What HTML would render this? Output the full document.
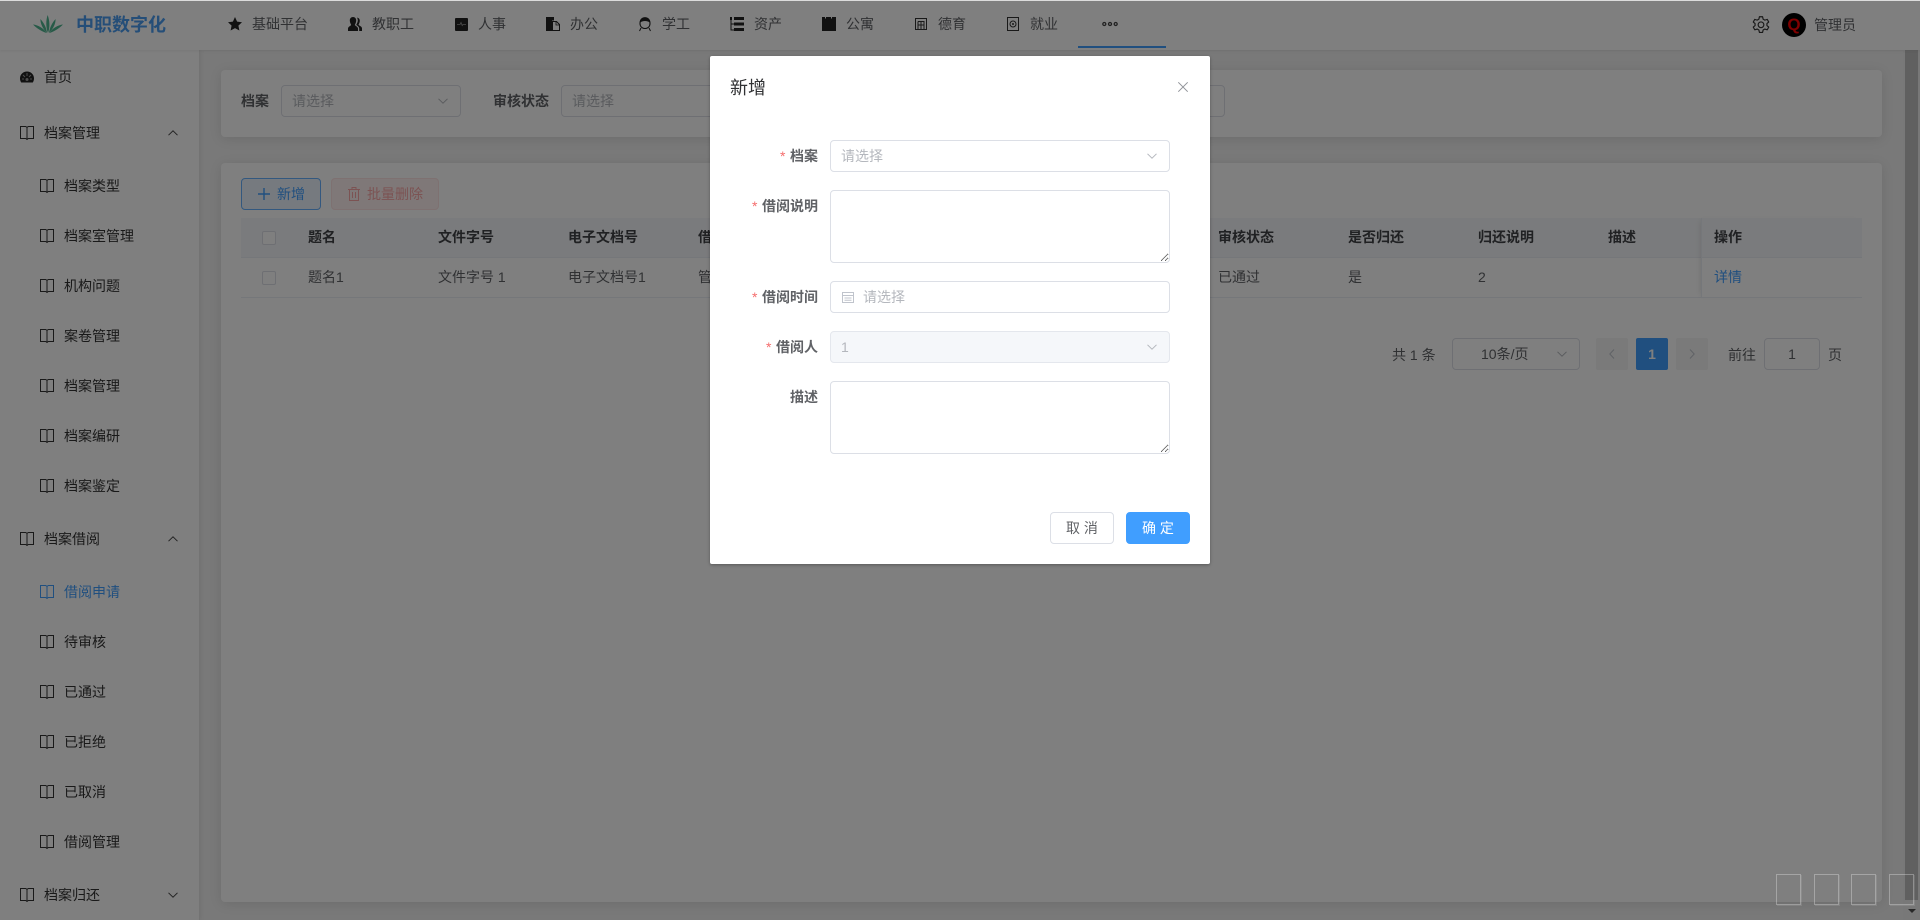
<!DOCTYPE html>
<html lang="zh-CN">
<head>
<meta charset="utf-8">
<title>中职数字化</title>
<style>
*{box-sizing:border-box}
html,body{margin:0;padding:0;width:1920px;height:920px;overflow:hidden;background:#f2f2f2;font-family:"Liberation Sans","Noto Sans CJK SC",sans-serif;font-size:14px;color:#606266}
.a{position:absolute}
.t{position:absolute;white-space:nowrap;line-height:20px;height:20px}
svg{position:absolute;display:block;overflow:visible}
#header{left:0;top:0;width:1920px;height:50px;background:#fff;box-shadow:0 1px 3px rgba(0,0,0,.08);z-index:3}
#side{left:0;top:50px;width:200px;height:870px;background:#fff;border-right:1px solid #e6e6e6;box-shadow:1px 0 4px rgba(0,0,0,.06);z-index:2}
.card{position:absolute;background:#fff;border-radius:4px;box-shadow:0 2px 12px rgba(0,0,0,.1)}
.inp{position:absolute;height:32px;border:1px solid #dcdfe6;border-radius:4px;background:#fff}
.b{font-weight:700}
.th{font-weight:700;color:#404246}
.ph{color:#b4b7bd}
.s{color:#333}
#mask{left:0;top:1px;width:1920px;height:919px;background:rgba(0,0,0,.5);z-index:5}
#dlg{left:710px;top:56px;width:500px;height:508px;background:#fff;border-radius:2px;box-shadow:0 1px 3px rgba(0,0,0,.3);z-index:6}
.star{color:#f56c6c}
.lab{font-weight:700;color:#606266}
textarea{position:absolute;left:120px;width:340px;border:1px solid #dcdfe6;border-radius:4px;background:#fff;padding:0;margin:0;outline:0;display:block;resize:vertical}
.btn{position:absolute;top:456px;width:64px;height:32px;border-radius:4px;text-align:center;line-height:30px;font-size:14px;white-space:pre}
.sq{position:absolute;top:874px;width:25px;height:31px;border:1px solid rgba(255,255,255,.3);box-shadow:1px 1px 0 rgba(255,255,255,.1);z-index:7}
</style>
</head>
<body>
<svg width="0" height="0" style="position:absolute">
<defs>
<symbol id="book" viewBox="0 0 14 14"><path d="M.5 .5H5.600l1.400.8v12l-1.400-.8H.500zM13.500 .5H8.400L7 1.300v12l1.400-.8h5.100z" fill="none" stroke="currentColor" stroke-width="1"/></symbol>
<symbol id="chev" viewBox="0 0 10 6"><path d="M.5.800 5 5.200 9.500.800" fill="none" stroke="currentColor" stroke-width="1"/></symbol>
<symbol id="chevup" viewBox="0 0 10 6"><path d="M.5 5.200 5 .8l4.500 4.400" fill="none" stroke="currentColor" stroke-width="1"/></symbol>
</defs>
</svg>

<!-- scrollbar -->
<div class="a" style="left:1903px;top:0;width:17px;height:920px;background:#f1f1f1"></div>
<div class="a" style="left:1905px;top:0;width:13px;height:900px;background:#c1c1c1"></div>
<div class="a" style="left:1908px;top:909px;width:0;height:0;border-left:4px solid transparent;border-right:4px solid transparent;border-top:4px solid #505050"></div>

<!-- header -->
<div id="header" class="a">
  <svg style="left:33px;top:15px" width="30" height="18" viewBox="0 0 30 18">
    <g fill="#4fb590">
      <path d="M15 18C12.600 12 13 5 14.600 0c2 5 2.600 12 .4 18z"/>
      <path d="M14 18C10 14 7.400 9 7.400 4c3.200 3.600 6 8.400 6.600 14z"/>
      <path d="M16 18c4-4 6.600-9 6.600-14-3.200 3.600-6 8.400-6.600 14z"/>
      <path d="M13.500 18C9 16.600 4 13.500 0 9.500c5 .5 10.500 3.500 13.500 8.500z"/>
      <path d="M16.500 18c4.500-1.400 9.500-4.500 13.500-8.500-5 .5-10.500 3.500-13.500 8.500z"/>
    </g>
  </svg>
  <div class="t b" style="left:76px;top:15px;font-size:18px;color:#4a9cf0">中职数字化</div>

  <svg style="left:228px;top:17px" width="14" height="14" viewBox="0 0 14 14"><path d="M7 0l2.100 4.600 4.900.6-3.600 3.400 1 4.900L7 11.100 2.600 13.500l1-4.900L0 5.200l4.900-.6z" fill="#222"/></svg>
  <div class="t" style="left:252px;top:14px">基础平台</div>

  <svg style="left:348px;top:17px" width="14" height="14" viewBox="0 0 14 14"><path d="M5 0c2 0 3.200 1.500 3.200 3.500S7.200 7 6.800 8c.4.800 3.200 1.800 3.200 3.500V14H0v-2.500C0 9.800 2.800 8.800 3.200 8 2.800 7 1.800 5.500 1.800 3.500S3 0 5 0zM9 .6c1.800.2 2.800 1.500 2.800 3.100S11 6.800 10.500 7.800c.3.700 3.500 1.700 3.500 3.500V14h-2.800v-2.500c0-1.500-1.500-2.800-3-3.500.8-1.500 1.600-2.900 1.600-4.500S9.400 1.500 9 .6z" fill="#222"/></svg>
  <div class="t" style="left:372px;top:14px">教职工</div>

  <svg style="left:455px;top:18px" width="13" height="13" viewBox="0 0 13 13"><rect width="13" height="13" rx="1" fill="#222"/><path d="M2 6.500h3l1-2 1.200 3 .8-1h3" stroke="#999" stroke-width=".8" fill="none"/></svg>
  <div class="t" style="left:478px;top:14px">人事</div>

  <svg style="left:546px;top:17px" width="14" height="14" viewBox="0 0 14 14"><path d="M0 0h8v3.500H6V14H0z" fill="#222"/><path d="M6.500 4.500h4l3 3V13.500h-7z" fill="none" stroke="#222"/><path d="M10 4.500v3.500h3.500" fill="none" stroke="#222" stroke-width=".8"/></svg>
  <div class="t" style="left:570px;top:14px">办公</div>

  <svg style="left:638px;top:17px" width="14" height="14" viewBox="0 0 14 14"><path d="M2 6.500C2 3 4 .7 7 .7S12 3 12 6.500c0 3-2 5-5 5s-5-2-5-5z" fill="none" stroke="#222" stroke-width="1.100"/><path d="M1.800 6C3 4.500 5 4 7 4s4 .5 5.200 2l-.4-3L9 .7H5L2.200 3z" fill="#222"/><path d="M3 11l-1.500 3M11 11l1.500 3" stroke="#222"/></svg>
  <div class="t" style="left:662px;top:14px">学工</div>

  <svg style="left:730px;top:17px" width="14" height="14" viewBox="0 0 14 14"><path d="M0 0h2v3H0zM4 0h10v3H4zM4 5.500h10v3H4zM4 11h10v3H4z" fill="#222"/><path d="M1 3v10h3M1 7h3" stroke="#222" fill="none"/></svg>
  <div class="t" style="left:754px;top:14px">资产</div>

  <svg style="left:822px;top:17px" width="14" height="14" viewBox="0 0 14 14"><path d="M0 0h3v1.500h1V0h5v1.500h1V0h4v14H0z" fill="#222"/></svg>
  <div class="t" style="left:846px;top:14px">公寓</div>

  <svg style="left:915px;top:18px" width="12" height="12" viewBox="0 0 12 12"><path d="M.5.500h11v11H.500zM3 3.500h6v8M3 3.500v8M6 3.500v8M3 7h6" fill="none" stroke="#333"/></svg>
  <div class="t" style="left:938px;top:14px">德育</div>

  <svg style="left:1007px;top:17px" width="12" height="14" viewBox="0 0 12 14"><path d="M.5.500h11v13H.500z" fill="none" stroke="#333"/><circle cx="6" cy="7" r="3" fill="none" stroke="#333"/><circle cx="6" cy="7" r="1" fill="#333"/></svg>
  <div class="t" style="left:1030px;top:14px">就业</div>

  <svg style="left:1102px;top:21px" width="16" height="6" viewBox="0 0 16 6"><g fill="none" stroke="#444" stroke-width="1.300"><circle cx="2.300" cy="3" r="1.500"/><circle cx="8" cy="3" r="1.500"/><circle cx="13.700" cy="3" r="1.500"/></g></svg>
  <div class="a" style="left:1078px;top:46px;width:88px;height:2px;background:#409eff"></div>

  <svg style="left:1752px;top:16px" width="18" height="18" viewBox="0 0 17 17"><path d="M7 .7h3l.5 2.300 1.600.9 2.300-.7 1.400 2.500-1.700 1.500v1.800l1.700 1.500-1.400 2.500-2.300-.7-1.600.9-.5 2.300H7l-.5-2.300-1.600-.9-2.300.7L1.200 10.500l1.700-1.500V7.200L1.200 5.700l1.400-2.500 2.300.7L6.500 3z" fill="none" stroke="#333" stroke-width="1.100" stroke-linejoin="round"/><circle cx="8.500" cy="8.300" r="2.700" fill="none" stroke="#333" stroke-width="1.100"/></svg>
  <div class="a" style="left:1782px;top:13px;width:24px;height:24px;border-radius:50%;background:#000;color:#f00;font-weight:700;font-size:17px;line-height:24px;text-align:center">Q</div>
  <div class="t" style="left:1814px;top:15px">管理员</div>
</div>

<!-- sidebar -->
<div id="side" class="a"></div>
<div class="a s" style="left:0;top:0;width:200px;height:920px;z-index:3;pointer-events:none">
  <svg style="left:20px;top:70px" width="14" height="14" viewBox="0 0 14 14"><path d="M7 1.500C3.100 1.500 0 4.500 0 8.400c0 1.500.4 2.900 1.200 4.100h11.600c.8-1.200 1.200-2.600 1.200-4.100 0-3.900-3.100-6.900-7-6.900z" fill="#222"/><path d="M7 3v3M3 5l2 2M11 5L9 7M2 9h2M10 9h2" stroke="#999" stroke-width="1"/><circle cx="7" cy="9.500" r="1.500" fill="#999"/></svg>
  <div class="t" style="left:44px;top:67px">首页</div>

  <svg style="left:20px;top:126px;color:#333" width="14" height="14"><use href="#book"/></svg>
  <div class="t" style="left:44px;top:123px">档案管理</div>
  <svg style="left:168px;top:130px;color:#444" width="10" height="6"><use href="#chevup"/></svg>

  <svg style="left:40px;top:179px;color:#333" width="14" height="14"><use href="#book"/></svg>
  <div class="t" style="left:64px;top:176px">档案类型</div>
  <svg style="left:40px;top:229px;color:#333" width="14" height="14"><use href="#book"/></svg>
  <div class="t" style="left:64px;top:226px">档案室管理</div>
  <svg style="left:40px;top:279px;color:#333" width="14" height="14"><use href="#book"/></svg>
  <div class="t" style="left:64px;top:276px">机构问题</div>
  <svg style="left:40px;top:329px;color:#333" width="14" height="14"><use href="#book"/></svg>
  <div class="t" style="left:64px;top:326px">案卷管理</div>
  <svg style="left:40px;top:379px;color:#333" width="14" height="14"><use href="#book"/></svg>
  <div class="t" style="left:64px;top:376px">档案管理</div>
  <svg style="left:40px;top:429px;color:#333" width="14" height="14"><use href="#book"/></svg>
  <div class="t" style="left:64px;top:426px">档案编研</div>
  <svg style="left:40px;top:479px;color:#333" width="14" height="14"><use href="#book"/></svg>
  <div class="t" style="left:64px;top:476px">档案鉴定</div>

  <svg style="left:20px;top:532px;color:#333" width="14" height="14"><use href="#book"/></svg>
  <div class="t" style="left:44px;top:529px">档案借阅</div>
  <svg style="left:168px;top:536px;color:#444" width="10" height="6"><use href="#chevup"/></svg>

  <svg style="left:40px;top:585px;color:#409eff" width="14" height="14"><use href="#book"/></svg>
  <div class="t" style="left:64px;top:582px;color:#409eff">借阅申请</div>
  <svg style="left:40px;top:635px;color:#333" width="14" height="14"><use href="#book"/></svg>
  <div class="t" style="left:64px;top:632px">待审核</div>
  <svg style="left:40px;top:685px;color:#333" width="14" height="14"><use href="#book"/></svg>
  <div class="t" style="left:64px;top:682px">已通过</div>
  <svg style="left:40px;top:735px;color:#333" width="14" height="14"><use href="#book"/></svg>
  <div class="t" style="left:64px;top:732px">已拒绝</div>
  <svg style="left:40px;top:785px;color:#333" width="14" height="14"><use href="#book"/></svg>
  <div class="t" style="left:64px;top:782px">已取消</div>
  <svg style="left:40px;top:835px;color:#333" width="14" height="14"><use href="#book"/></svg>
  <div class="t" style="left:64px;top:832px">借阅管理</div>

  <svg style="left:20px;top:888px;color:#333" width="14" height="14"><use href="#book"/></svg>
  <div class="t" style="left:44px;top:885px">档案归还</div>
  <svg style="left:168px;top:892px;color:#444" width="10" height="6"><use href="#chev"/></svg>
</div>

<!-- filter card -->
<div class="card" style="left:221px;top:70px;width:1661px;height:67px"></div>
<div class="t b" style="left:241px;top:91px">档案</div>
<div class="inp" style="left:281px;top:85px;width:180px"></div>
<div class="t ph" style="left:292px;top:91px">请选择</div>
<svg style="left:438px;top:98px;color:#b4b7bd" width="10" height="6"><use href="#chev"/></svg>
<div class="t b" style="left:493px;top:91px">审核状态</div>
<div class="inp" style="left:561px;top:85px;width:180px"></div>
<div class="t ph" style="left:572px;top:91px">请选择</div>
<div class="inp" style="left:1045px;top:85px;width:180px"></div>

<!-- table card -->
<div class="card" style="left:221px;top:163px;width:1661px;height:739px"></div>
<div class="a" style="left:241px;top:178px;width:80px;height:32px;background:#ecf5ff;border:1px solid #66b1ff;border-radius:4px"></div>
<svg style="left:258px;top:188px" width="12" height="12" viewBox="0 0 12 12"><path d="M6 0v12M0 6h12" stroke="#409eff" stroke-width="1.400"/></svg>
<div class="t" style="left:277px;top:184px;color:#409eff">新增</div>
<div class="a" style="left:331px;top:178px;width:108px;height:32px;background:#fef0f0;border:1px solid #fde2e2;border-radius:4px"></div>
<svg style="left:348px;top:187px" width="12" height="14" viewBox="0 0 12 14"><path d="M0 2.500h12M4 2.500V.5h4v2M1.500 2.500V13.500h9V2.500M4.500 5v6M7.500 5v6" fill="none" stroke="#f9a7a7"/></svg>
<div class="t" style="left:367px;top:184px;color:#f9a7a7">批量删除</div>

<div class="a" style="left:241px;top:218px;width:1621px;height:40px;background:#f5f7fa;border-bottom:1px solid #ebeef5"></div>
<div class="a" style="left:241px;top:258px;width:1621px;height:40px;border-bottom:1px solid #ebeef5"></div>
<div class="a" style="left:1701px;top:218px;width:161px;height:80px;border-left:1px solid #ebeef5;box-shadow:-3px 0 6px -3px rgba(0,0,0,.12)"></div>
<div class="a" style="left:262px;top:231px;width:14px;height:14px;border:1px solid #dcdfe6;border-radius:2px;background:#fff"></div>
<div class="a" style="left:262px;top:271px;width:14px;height:14px;border:1px solid #dcdfe6;border-radius:2px;background:#fff"></div>

<div class="t th" style="left:308px;top:227px">题名</div>
<div class="t th" style="left:438px;top:227px">文件字号</div>
<div class="t th" style="left:568px;top:227px">电子文档号</div>
<div class="t th" style="left:698px;top:227px">借阅说明</div>
<div class="t th" style="left:1218px;top:227px">审核状态</div>
<div class="t th" style="left:1348px;top:227px">是否归还</div>
<div class="t th" style="left:1478px;top:227px">归还说明</div>
<div class="t th" style="left:1608px;top:227px">描述</div>
<div class="t th" style="left:1714px;top:227px">操作</div>

<div class="t" style="left:308px;top:267px">题名1</div>
<div class="t" style="left:438px;top:267px">文件字号 1</div>
<div class="t" style="left:568px;top:267px">电子文档号1</div>
<div class="t" style="left:698px;top:267px">管理员</div>
<div class="t" style="left:1218px;top:267px">已通过</div>
<div class="t" style="left:1348px;top:267px">是</div>
<div class="t" style="left:1478px;top:267px">2</div>
<div class="t" style="left:1714px;top:267px;color:#409eff">详情</div>

<!-- pagination -->
<div class="t" style="left:1392px;top:345px">共 1 条</div>
<div class="inp" style="left:1452px;top:338px;width:128px"></div>
<div class="t" style="left:1481px;top:344px">10条/页</div>
<svg style="left:1557px;top:351px;color:#b4b7bd" width="10" height="6"><use href="#chev"/></svg>
<div class="a" style="left:1596px;top:338px;width:32px;height:32px;background:#f4f4f5;border-radius:2px"></div>
<svg style="left:1609px;top:349px" width="6" height="10" viewBox="0 0 6 10"><path d="M5 .5.800 5 5 9.500" fill="none" stroke="#c0c4cc"/></svg>
<div class="a b" style="left:1636px;top:338px;width:32px;height:32px;background:#409eff;border-radius:2px;color:#fff;text-align:center;line-height:32px">1</div>
<div class="a" style="left:1676px;top:338px;width:32px;height:32px;background:#f4f4f5;border-radius:2px"></div>
<svg style="left:1689px;top:349px" width="6" height="10" viewBox="0 0 6 10"><path d="M1 .5 5.200 5 1 9.500" fill="none" stroke="#c0c4cc"/></svg>
<div class="t" style="left:1728px;top:345px">前往</div>
<div class="inp" style="left:1764px;top:338px;width:56px;text-align:center;line-height:30px">1</div>
<div class="t" style="left:1828px;top:345px">页</div>

<div id="mask" class="a"></div>
<div class="a" style="left:0;top:0;width:1920px;height:1px;background:#dcdcdc;z-index:5"></div>

<div class="sq" style="left:1776px"></div>
<div class="sq" style="left:1814px"></div>
<div class="sq" style="left:1851px"></div>
<div class="sq" style="left:1889px"></div>

<!-- dialog -->
<div id="dlg" class="a">
  <div class="t" style="left:20px;top:20px;font-size:18px;line-height:24px;height:24px;color:#303133">新增</div>
  <svg style="left:468px;top:26px" width="10" height="10" viewBox="0 0 10 10"><path d="M.3.300l9.400 9.400M9.700.300.300 9.700" stroke="#909399" stroke-width="1"/></svg>

  <div class="t star" style="left:70px;top:90px">*</div>
  <div class="t lab" style="left:80px;top:90px">档案</div>
  <div class="inp" style="left:120px;top:84px;width:340px"></div>
  <div class="t ph" style="left:131px;top:90px">请选择</div>
  <svg style="left:437px;top:97px;color:#b4b7bd" width="10" height="6"><use href="#chev"/></svg>

  <div class="t star" style="left:42px;top:140px">*</div>
  <div class="t lab" style="left:52px;top:140px">借阅说明</div>
  <textarea style="top:134px;height:73px"></textarea>

  <div class="t star" style="left:42px;top:231px">*</div>
  <div class="t lab" style="left:52px;top:231px">借阅时间</div>
  <div class="inp" style="left:120px;top:225px;width:340px"></div>
  <svg style="left:132px;top:235px" width="12" height="12" viewBox="0 0 12 12"><path d="M.5 1.500h11v10H.500zM.5 4.500h11M2.500 7h7M2.500 9.300h7" fill="none" stroke="#c0c4cc" stroke-width="1"/></svg>
  <div class="t ph" style="left:153px;top:231px">请选择</div>

  <div class="t star" style="left:56px;top:281px">*</div>
  <div class="t lab" style="left:66px;top:281px">借阅人</div>
  <div class="inp" style="left:120px;top:275px;width:340px;background:#f5f7fa;border-color:#e4e7ed"></div>
  <div class="t ph" style="left:131px;top:281px">1</div>
  <svg style="left:437px;top:288px;color:#b4b7bd" width="10" height="6"><use href="#chev"/></svg>

  <div class="t lab" style="left:80px;top:331px">描述</div>
  <textarea style="top:325px;height:73px"></textarea>

  <div class="btn" style="left:340px;background:#fff;border:1px solid #dcdfe6;color:#606266">取 消</div>
  <div class="btn" style="left:416px;background:#409eff;border:1px solid #409eff;color:#fff">确 定</div>
</div>
</body>
</html>
